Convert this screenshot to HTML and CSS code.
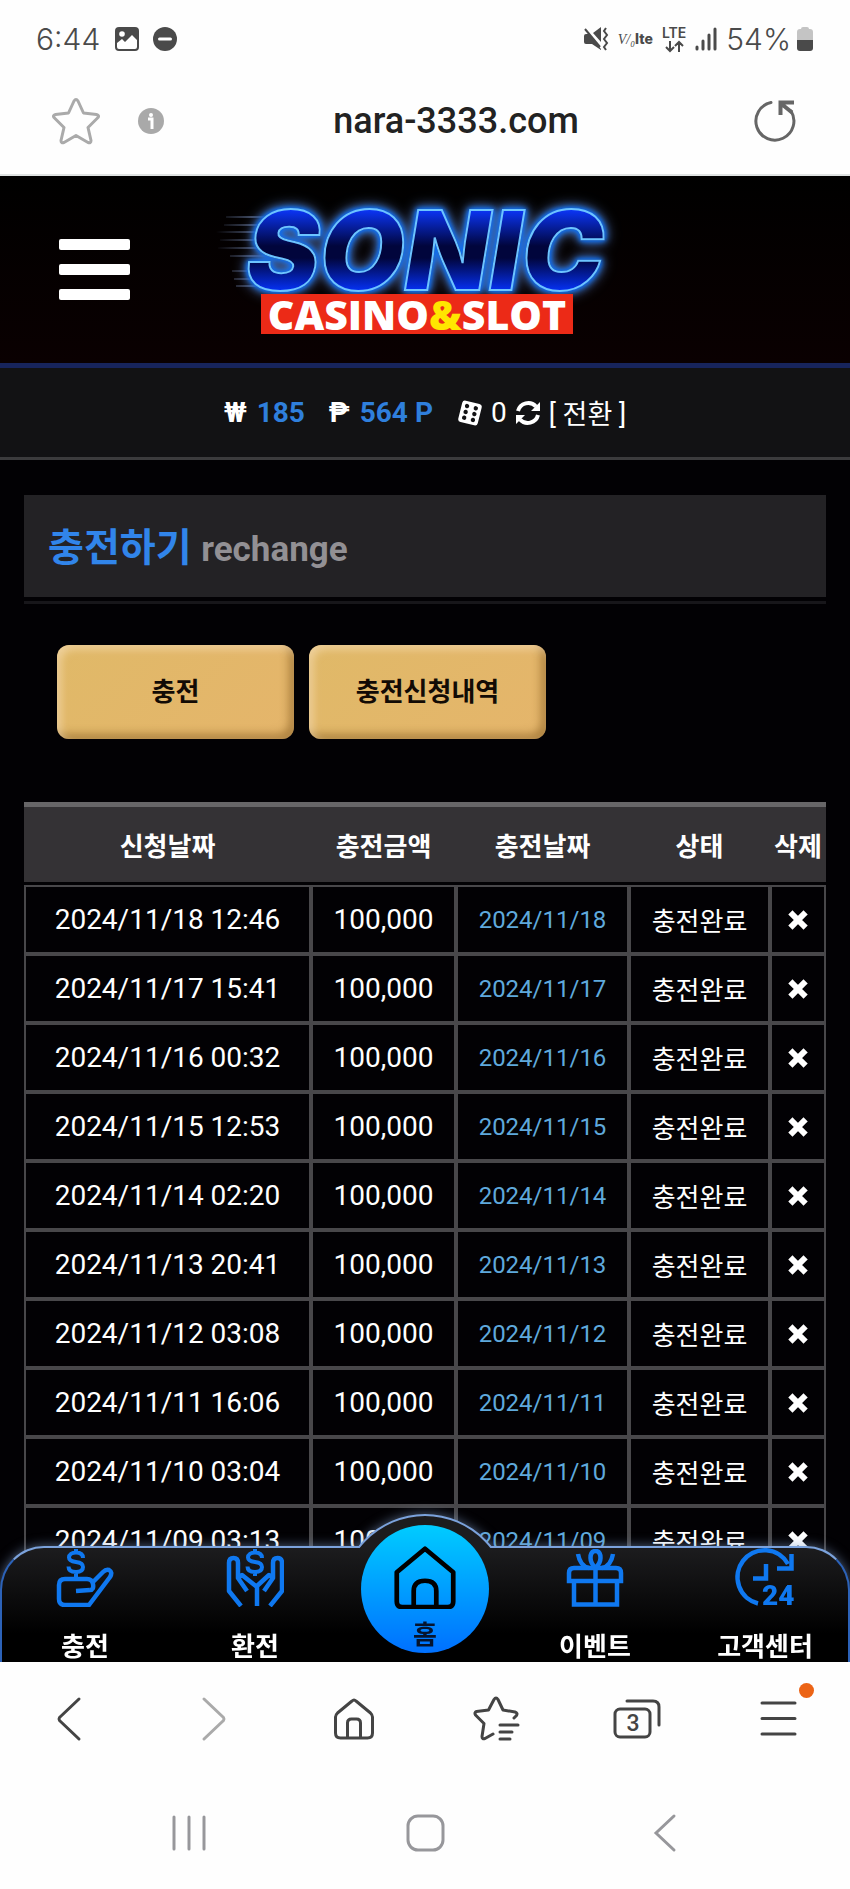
FILE: index.html
```html
<!DOCTYPE html>
<html lang="ko">
<head>
  <meta charset="UTF-8" />
  <meta name="viewport" content="width=device-width, initial-scale=1" />
  <title>충전하기</title>
  <link rel="stylesheet" href="styles.css">
</head>
<body>
  <!-- shared icons -->
  <svg class="sprite" aria-hidden="true">
    <symbol id="times" viewBox="0 0 20 20">
      <path d="M4.5 4.5l11 11M15.500 4.500l-11 11" fill="none" stroke="currentColor" stroke-width="6" stroke-linecap="square" stroke-linejoin="round" />
    </symbol>
  </svg>

  <div class="status-bar">
    <div class="status-group">
      <span class="clock">6:44</span>
      <svg width="26" height="26" viewBox="0 0 26 26">
        <rect x="1" y="1" width="24" height="24" rx="4" fill="#4a4a4a" />
        <circle cx="8" cy="8" r="2.800" fill="#fff" />
        <path d="M3 17l5-4 3 3 7-7 5 5v7q0 2-2 2H5q-2 0-2-2z" fill="#fff" />
      </svg>
      <svg class="dnd" width="26" height="26" viewBox="0 0 26 26">
        <circle cx="13" cy="13" r="12" fill="#4a4a4a" />
        <path d="M7.500 13h11" stroke="#fff" stroke-width="3" stroke-linecap="round" />
      </svg>
    </div>
    <div class="status-group status-right">
      <svg width="26" height="26" viewBox="0 0 26 26" fill="#4a4a4a">
        <path d="M1 10q0-2 2-2h3l12 15v1L9 18H3q-2 0-2-2zM10 7l8-6v15z" />
        <path d="M2 1l17 21" stroke="#fff" stroke-width="2" />
        <path d="M2 3l15 18" stroke="#4a4a4a" stroke-width="2" />
        <path d="M23 2l-2 3 3 4-3 4 3 4-3 4 2 3" fill="none" stroke="#4a4a4a" stroke-width="2" />
      </svg>
      <span class="volte"><i>V/₀</i><b>lte</b></span>
      <span class="lte">
        <span>LTE</span>
        <svg width="20" height="13" viewBox="0 0 20 13" fill="none" stroke="#4a4a4a" stroke-width="2">
          <path d="M6 1v10M2 7l4 4 4-4M15 12V2M11 6l4-4 4 4" />
        </svg>
      </span>
      <svg class="signal" width="22" height="24" viewBox="0 0 22 24" stroke="#4a4a4a" stroke-width="3" stroke-linecap="round">
        <path d="M2 20v2M8 14v8M14 8v14M20 2v20" />
      </svg>
      <span class="battery-text">54%</span>
      <svg width="18" height="26" viewBox="0 0 18 26">
        <path d="M5 3q0-2 2-2h4q2 0 2 2h1q3 0 3 3v8H1V6q0-3 3-3z" fill="#c4c4c4" />
        <path d="M1 14h16v8q0 3-3 3H4q-3 0-3-3z" fill="#4a4a4a" />
      </svg>
    </div>
  </div>

  <div class="url-bar">
    <div class="url-left">
      <button aria-label="Bookmark">
        <svg width="48" height="48" viewBox="0 0 48 48" fill="none" stroke="#aaa" stroke-width="3" stroke-linejoin="round">
          <path d="M22 4q2-3 4 0l5.500 12 13 1.500q3.500 1 1 3.500L36 30.500l3 13q0 3-3 2L24 38.500 12 45.500q-3 1-3-2l3-13L2.500 21q-2.500-2.500 1-3.500l13-1.500z" />
        </svg>
      </button>
      <button aria-label="Site information">
        <svg width="26" height="26" viewBox="0 0 26 26">
          <circle cx="13" cy="13" r="13" fill="#a9a9a9" />
          <circle cx="13" cy="7" r="2" fill="#fff" />
          <path d="M10 11h4v10" fill="none" stroke="#fff" stroke-width="3" />
        </svg>
      </button>
    </div>
    <span class="url">nara-3333.com</span>
    <button class="reload" aria-label="Reload">
      <svg width="42" height="42" viewBox="0 0 42 42" fill="none" stroke="#666" stroke-width="3">
        <path d="M17 2.500A19 19 0 1 0 37 11" stroke-linecap="round" />
        <path d="M26.500 15V2.500H40M27 3.500l11 9" stroke-width="4" />
      </svg>
    </button>
  </div>

  <div class="webview">
    <header class="site-header">
      <button class="menu-btn" aria-label="메뉴"><span></span><span></span><span></span></button>
      <a class="logo" href="#home">
        <svg class="speed" width="90" height="80" viewBox="0 0 90 80" aria-hidden="true">
          <defs>
            <linearGradient id="streak" x1="0" x2="90" y1="0" y2="0" gradientUnits="userSpaceOnUse">
              <stop offset="0" stop-color="#7d93c0" stop-opacity="0" />
              <stop offset=".4" stop-color="#7d93c0" />
              <stop offset="1" stop-color="#1540c0" stop-opacity=".2" />
            </linearGradient>
          </defs>
          <path d="M10 7h70M8 15h70M0 22h60M4 30h60M2 38h60M14 46h50M16 61h40M18 69h40M20 76h40" stroke="url(#streak)" stroke-width="1" />
        </svg>
        <span class="logo-main">SONIC</span>
        <span class="logo-sub">CASINO<em>&amp;</em>SLOT</span>
      </a>
    </header>

    <div class="wallet">
      <span class="unit">₩</span>
      <span class="amount">185</span>
      <span class="unit unit-point">₱</span>
      <span class="amount">564 P</span>
      <svg class="dice" width="26" height="26" viewBox="0 0 26 26">
        <g transform="rotate(14 13 13)">
          <rect x="3" y="2" width="20" height="22" rx="3" fill="#fff" />
          <g fill="#121214">
            <circle cx="8.500" cy="7" r="2.200" /><circle cx="17.500" cy="7" r="2.200" />
            <circle cx="8.500" cy="13" r="2.200" /><circle cx="17.500" cy="13" r="2.200" />
            <circle cx="8.500" cy="19" r="2.200" /><circle cx="17.500" cy="19" r="2.200" />
          </g>
        </g>
      </svg>
      <span class="count">0</span>
      <button class="convert">
        <svg width="26" height="26" viewBox="0 0 26 26" fill="none" stroke="#fff" stroke-width="4">
          <path d="M3 11A10.500 10.500 0 0 1 21 6.500M23 15A10.500 10.500 0 0 1 5 19.500" />
          <path d="M25 2v9h-9zM1 24v-9h9z" fill="#fff" stroke="none" />
        </svg>
        <span>[ 전환 ]</span>
      </button>
    </div>

    <main>
      <h1 class="page-title">충전하기 <small>rechange</small></h1>

      <div class="tabs">
        <button>충전</button>
        <button>충전신청내역</button>
      </div>

      <table class="history">
        <colgroup>
          <col class="col-request"><col class="col-amount"><col class="col-date"><col class="col-state"><col class="col-delete">
        </colgroup>
        <thead>
          <tr><th>신청날짜</th><th>충전금액</th><th>충전날짜</th><th>상태</th><th>삭제</th></tr>
        </thead>
        <tbody>
          <tr><td>2024/11/18 12:46</td><td>100,000</td><td class="date">2024/11/18</td><td class="state">충전완료</td><td><button aria-label="삭제"><svg width="20" height="20"><use href="#times" /></svg></button></td></tr>
          <tr><td>2024/11/17 15:41</td><td>100,000</td><td class="date">2024/11/17</td><td class="state">충전완료</td><td><button aria-label="삭제"><svg width="20" height="20"><use href="#times" /></svg></button></td></tr>
          <tr><td>2024/11/16 00:32</td><td>100,000</td><td class="date">2024/11/16</td><td class="state">충전완료</td><td><button aria-label="삭제"><svg width="20" height="20"><use href="#times" /></svg></button></td></tr>
          <tr><td>2024/11/15 12:53</td><td>100,000</td><td class="date">2024/11/15</td><td class="state">충전완료</td><td><button aria-label="삭제"><svg width="20" height="20"><use href="#times" /></svg></button></td></tr>
          <tr><td>2024/11/14 02:20</td><td>100,000</td><td class="date">2024/11/14</td><td class="state">충전완료</td><td><button aria-label="삭제"><svg width="20" height="20"><use href="#times" /></svg></button></td></tr>
          <tr><td>2024/11/13 20:41</td><td>100,000</td><td class="date">2024/11/13</td><td class="state">충전완료</td><td><button aria-label="삭제"><svg width="20" height="20"><use href="#times" /></svg></button></td></tr>
          <tr><td>2024/11/12 03:08</td><td>100,000</td><td class="date">2024/11/12</td><td class="state">충전완료</td><td><button aria-label="삭제"><svg width="20" height="20"><use href="#times" /></svg></button></td></tr>
          <tr><td>2024/11/11 16:06</td><td>100,000</td><td class="date">2024/11/11</td><td class="state">충전완료</td><td><button aria-label="삭제"><svg width="20" height="20"><use href="#times" /></svg></button></td></tr>
          <tr><td>2024/11/10 03:04</td><td>100,000</td><td class="date">2024/11/10</td><td class="state">충전완료</td><td><button aria-label="삭제"><svg width="20" height="20"><use href="#times" /></svg></button></td></tr>
          <tr><td>2024/11/09 03:13</td><td>100,000</td><td class="date">2024/11/09</td><td class="state">충전완료</td><td><button aria-label="삭제"><svg width="20" height="20"><use href="#times" /></svg></button></td></tr>
        </tbody>
      </table>
    </main>

    <nav class="quick-nav" aria-label="바로가기">
      <div class="nav-shape">
        <div class="nav-panel"></div>
        <div class="nav-dome"></div>
      </div>
      <a href="#deposit">
        <svg width="58" height="58" viewBox="0 0 58 58" fill="none" stroke="#0f78f0" stroke-width="4.500" stroke-linejoin="round">
          <path d="M27 9c0-4-3-5.500-7-5.500s-7 2-7 5 3 4 7 4.500 7 1.500 7 5-3 5-7 5-7.500-1.500-7.500-5.500M20 0v4M20 23v5" stroke-width="4" />
          <path d="M34 41q4 0 3-6-1-5-6-5H9q-6 0-6 6v14q0 6 6 6h24l21-28q3-5-1-7-3-1-6 2L36 34M20 42l14-1" />
        </svg>
        <span>충전</span>
      </a>
      <a href="#withdraw">
        <svg width="58" height="58" viewBox="0 0 58 58" fill="none" stroke="#0f78f0" stroke-width="4.500" stroke-linejoin="round">
          <path d="M36 9c0-4-3-5.500-7-5.500s-7 2-7 5 3 4 7 4.500 7 1.500 7 5-3 5-7 5-7.500-1.500-7.500-5.500M29 0v4M29 23v4" stroke-width="4" />
          <path d="M15 57L3 42V14q0-5 4.500-5t4.500 5v15l9 13M12 29l4-3 15 12v19M44 57l12-15V14q0-5-4.500-5T47 14v15l-9 13M47 29l-4-3-12 11" />
        </svg>
        <span>환전</span>
      </a>
      <a class="home" href="#home">
        <svg width="68" height="68" viewBox="0 0 68 68" fill="none" stroke="#000" stroke-width="5" stroke-linejoin="round">
          <path d="M34 4L4 29v31q0 6 6 6h48q6 0 6-6V29zM22 66V49q0-11 12-11t12 11v17" />
        </svg>
        <span>홈</span>
      </a>
      <a href="#event">
        <svg width="58" height="58" viewBox="0 0 58 58" fill="none" stroke="#0f78f0" stroke-width="4.500">
          <path d="M3 32v-8q0-5 5-5h42q5 0 5 5v8zM8 32v23.500h43V32M29.500 19v37" />
          <path d="M29.500 19q-5-5-5-10 0-7 5-7t5 7q0 5-5 10M12 5q2 12 11 14M47 5q-2 12-11 14" />
        </svg>
        <span>이벤트</span>
      </a>
      <a href="#support">
        <svg class="support" width="58" height="58" viewBox="0 0 58 58" fill="none" stroke="#0f78f0" stroke-width="4.500">
          <path d="M22 54.500A27 27 0 1 1 52 15" />
          <path d="M55.500 5v14.500H41M30 15v14.500H17" />
          <text x="26" y="56" class="hours">24</text>
        </svg>
        <span>고객센터</span>
      </a>
    </nav>
  </div>

  <div class="toolbar">
    <button aria-label="Back">
      <svg width="48" height="48" viewBox="0 0 48 48"><path d="M32 4L12.500 22.500q-1 1.500 0 3L32 44" /></svg>
    </button>
    <button class="disabled" aria-label="Forward" disabled>
      <svg width="48" height="48" viewBox="0 0 48 48"><path d="M16 4l19.500 18.500q1 1.500 0 3L16 44" /></svg>
    </button>
    <button aria-label="Home">
      <svg width="48" height="48" viewBox="0 0 48 48"><path d="M22 6q2-2 4 0l14.500 12q2 2 2 4v16q0 5-5 5h-27q-5 0-5-5V22q0-2 2-4zM17.500 43V28q0-4 4-4h5q4 0 4 4v15" /></svg>
    </button>
    <button aria-label="Bookmarks">
      <svg width="48" height="48" viewBox="0 0 48 48"><path d="M21 39l-8 4.500q-3 1-3-2l2-13L3.500 20q-1.500-2.500 1-3.500l12-1.500L22 4.500q2-3 4 0L31 15l12 2q3 1 1.500 3.500L42 23M28 30h18M28 37h12M28 44h10" /></svg>
    </button>
    <button class="tab-count" aria-label="Tabs, 3 open">
      <svg width="48" height="48" viewBox="0 0 48 48"><path d="M14 6h26q6 0 6 6v18" /><rect x="2" y="14" width="35" height="28" rx="5" /><text x="20" y="36">3</text></svg>
    </button>
    <button class="more" aria-label="Menu">
      <svg width="48" height="48" viewBox="0 0 48 48"><path d="M7 8h33M7 23.500h33M7 39h33" /></svg>
    </button>
  </div>

  <div class="system-nav">
    <button aria-label="Recents">
      <svg width="40" height="40" viewBox="0 0 40 40"><path d="M6 4v32M21 4v32M36 4v32" /></svg>
    </button>
    <button aria-label="Home screen">
      <svg width="40" height="40" viewBox="0 0 40 40"><rect x="3" y="3" width="35" height="34" rx="10" /></svg>
    </button>
    <button aria-label="Back">
      <svg width="40" height="40" viewBox="0 0 40 40"><path d="M32 3L14 20l18 17" /></svg>
    </button>
  </div>
</body>
</html>
```
FILE: styles.css
```css
* {
  box-sizing: border-box;
}
body {
  margin: 0;
  height: 100vh;
  display: flex;
  flex-direction: column;
  background: #fefefe;
  font-family: Roboto, "Noto Sans CJK KR", sans-serif;
}
button {
  margin: 0;
  padding: 0;
  border: none;
  background: none;
  color: inherit;
  font: inherit;
  cursor: pointer;
}
a {
  color: inherit;
  text-decoration: none;
}
svg {
  display: block;
}
.sprite {
  position: absolute;
  width: 0;
  height: 0;
}

/* Phone status bar */
.status-bar {
  flex: none;
  height: 78px;
  padding: 0 36px;
  display: flex;
  justify-content: space-between;
  align-items: center;
  color: #4a4a4a;
  font-family: Inter, sans-serif;
  font-size: 30px;
  font-weight: 300;
}
.status-group {
  display: flex;
  align-items: center;
  gap: 10px;
}
.clock {
  margin-right: 4px;
}
.dnd {
  margin-left: 2px;
}
.status-right {
  gap: 9px;
}
.volte {
  font-size: 14px;
  font-family: "Liberation Serif", serif;
}
.volte b {
  font-family: Inter, sans-serif;
  font-weight: 800;
}
.lte {
  display: flex;
  flex-direction: column;
  align-items: center;
  font-size: 14px;
  line-height: 14px;
  font-weight: 600;
}
.battery-text {
  margin-right: -4px;
}

/* Address bar */
.url-bar {
  flex: none;
  height: 98px;
  padding: 0 54px 10px 52px;
  display: grid;
  grid-template-columns: 1fr auto 1fr;
  align-items: center;
  border-bottom: 2px solid #dfe3e2;
}
.url-left {
  display: flex;
  align-items: center;
  gap: 38px;
}
.url {
  padding-left: 64px;
  font-size: 36px;
  font-weight: 500;
  color: #222;
}
.reload {
  justify-self: end;
}

/* Site */
.webview {
  flex: 1;
  min-height: 0;
  position: relative;
  overflow: hidden;
  background: #020104;
  color: #fff;
}
.site-header {
  height: 192px;
  padding: 34px 59px 0;
  display: grid;
  grid-template-columns: 1fr auto 1fr;
  align-items: start;
  background: linear-gradient(#000, #0a0001);
  border-bottom: 5px solid #17245c;
}
.menu-btn {
  width: 71px;
  margin-top: 29px;
  display: flex;
  flex-direction: column;
  gap: 14px;
}
.menu-btn span {
  height: 11px;
  border-radius: 2px;
  background: #fff;
}
.logo {
  position: relative;
  display: flex;
  flex-direction: column;
  align-items: center;
}
.speed {
  position: absolute;
  left: -22px;
  top: 0;
}
.logo-main {
  position: relative;
  padding: 0 8px;
  font-family: Inter, sans-serif;
  font-size: 110px;
  font-style: italic;
  font-weight: 900;
  line-height: 80px;
  color: transparent;
  background: linear-gradient(#0b35f5, #01053c 45%, #01053c 60%, #0530f0);
  -webkit-background-clip: text;
  background-clip: text;
  -webkit-text-stroke: 2px #6cc4ff;
  filter: drop-shadow(0 0 2px #0a6cf0) drop-shadow(0 0 3px #0a6cf0) drop-shadow(0 0 6px #5878b8);
}
.logo-sub {
  position: relative;
  margin: 4px 16px 0 0;
  padding: 0 7px;
  background: #ec2a17;
  font-family: "Open Sans", sans-serif;
  font-size: 41px;
  font-weight: 800;
  line-height: 40px;
}
.logo-sub em {
  font-style: normal;
  color: #ffe600;
}

.wallet {
  height: 92px;
  display: flex;
  justify-content: center;
  align-items: center;
  background: #121214;
  border-bottom: 3px solid #3b3b3d;
  font-size: 28px;
}
.unit {
  margin-right: 10px;
  font-weight: 700;
}
.unit-point {
  margin-left: 24px;
}
.amount {
  font-weight: 700;
  color: #2f7fdc;
}
.dice {
  margin: 0 8px 0 24px;
}
.convert {
  margin-left: 8px;
  display: flex;
  align-items: center;
  gap: 8px;
  font-size: 27px;
}

main {
  padding: 35px 24px 0;
}
.page-title {
  position: relative;
  margin: 0 0 48px;
  height: 102px;
  padding: 0 24px;
  background: #232225;
  font-size: 39px;
  line-height: 106px;
  color: #3185ea;
}
.page-title::after {
  content: "";
  position: absolute;
  left: 0;
  right: 0;
  bottom: -7px;
  height: 3px;
  background: #17161a;
}
.page-title small {
  font-size: 35px;
  font-weight: 700;
  color: #929094;
}
.tabs {
  padding: 0 33px;
  display: flex;
  gap: 15px;
}
.tabs button {
  width: 237px;
  height: 94px;
  padding-bottom: 5px;
  border-radius: 12px;
  background: linear-gradient(135deg, #e0b968, #e5b56b);
  box-shadow: inset 4px 4px 8px rgba(255, 235, 210, 0.5), inset -5px -5px 8px rgba(120, 80, 20, 0.5);
  color: #120b05;
  font-size: 26px;
  font-weight: 700;
}

.history {
  width: 100%;
  margin-top: 63px;
  table-layout: fixed;
  border-collapse: separate;
  border-spacing: 0;
  text-align: center;
}
.col-request { width: 287px; }
.col-amount { width: 145px; }
.col-date { width: 173px; }
.col-state { width: 141px; }
.col-delete { width: 56px; }
.history th {
  height: 83px;
  padding: 0;
  background: #343235;
  background-clip: padding-box;
  border-top: 5px solid #676668;
  border-bottom: 3px solid #020104;
  font-size: 26px;
  font-weight: 700;
}
.history td {
  height: 69px;
  padding: 0;
  border: 2px solid #48474a;
  font-size: 28px;
}
.history .date {
  font-size: 24px;
  color: #5fa9dc;
}
.history .state {
  font-size: 26px;
}
.history td button {
  display: block;
  margin: 0 auto;
}

/* Bottom shortcuts, laid over the page */
.quick-nav {
  position: absolute;
  left: 0;
  right: 0;
  bottom: 0;
  height: 116px;
  display: grid;
  grid-template-columns: repeat(5, 1fr);
}
.nav-shape {
  position: absolute;
  inset: 0;
  filter: drop-shadow(0 0 6px rgba(130, 160, 200, 0.6));
}
.nav-panel {
  height: 100%;
  background: linear-gradient(#1c1c1e, #000 75%);
  border: 2px solid #2c62b8;
  border-top-color: #7ba2dc;
  border-bottom: none;
  border-radius: 44px 44px 0 0;
}
.nav-dome {
  position: absolute;
  left: 50%;
  bottom: 114px;
  width: 172px;
  height: 34px;
  margin-left: -86px;
  overflow: hidden;
}
.nav-dome::before {
  content: "";
  display: block;
  height: 172px;
  border: 2px solid #7ba2dc;
  border-radius: 50%;
  background: #1c1c1e;
}
.quick-nav a {
  position: relative;
  padding-top: 3px;
  display: flex;
  flex-direction: column;
  align-items: center;
  gap: 22px;
  font-size: 26px;
  font-weight: 700;
  line-height: 36px;
  white-space: nowrap;
}
.quick-nav .home {
  justify-self: center;
  width: 128px;
  height: 128px;
  margin-top: -21px;
  padding-top: 20px;
  gap: 8px;
  border-radius: 50%;
  background: linear-gradient(#00ccff, #0070ff);
  color: #06142e;
}
.support {
  overflow: visible;
}
.hours {
  font-family: Roboto, sans-serif;
  font-size: 28px;
  font-weight: 900;
  fill: #0f78f0;
  stroke: none;
}

/* Browser toolbar and system buttons */
.toolbar {
  flex: none;
  height: 114px;
  display: grid;
  grid-template-columns: repeat(6, 1fr);
  place-items: center;
}
.toolbar svg {
  fill: none;
  stroke: #444;
  stroke-width: 3;
  stroke-linecap: round;
  stroke-linejoin: round;
}
.toolbar .disabled svg {
  stroke: #aaa;
}
.toolbar text {
  font-size: 23px;
  font-weight: 500;
  text-anchor: middle;
  fill: #444;
  stroke: none;
}
.more {
  position: relative;
}
.more::after {
  content: "";
  position: absolute;
  top: -12px;
  right: -11px;
  width: 15px;
  height: 15px;
  border-radius: 50%;
  background: #ec6416;
}
.system-nav {
  flex: none;
  height: 113px;
  padding: 0 70px;
  display: grid;
  grid-template-columns: repeat(3, 1fr);
  place-items: center;
}
.system-nav svg {
  fill: none;
  stroke: #97979b;
  stroke-width: 3;
  stroke-linecap: round;
}
```
